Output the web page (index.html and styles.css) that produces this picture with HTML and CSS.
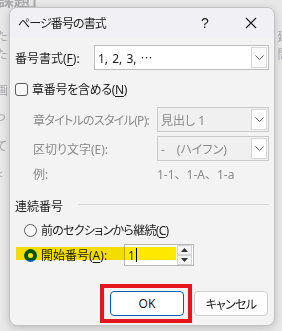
FILE: index.html
```html
<!DOCTYPE html>
<html lang="ja">
<head>
    <meta charset="UTF-8">
    <title>ページ番号の書式</title>
    <link rel="stylesheet" href="styles.css">
</head>
<body>
    <div class="doc">
        <p class="doc-head">課題」</p>
        <p class="doc-line l1">た<span class="gap"></span>建</p>
        <p class="doc-line l2">た<span class="gap"></span>間</p>
        <p class="doc-line l3">画</p>
        <p class="doc-line l4">っ</p>
        <p class="doc-line l5">て</p>
        <p class="doc-line l6">&lt;</p>
    </div>

    <div class="dialog">
        <div class="titlebar">
            <span class="title">ページ番号の書式</span>
            <span class="cap-btn">?</span>
            <span class="cap-btn">
                <svg width="12" height="12" viewBox="0 0 12 12"><path d="M1 1L11 11M11 1L1 11" stroke="#1b1b1b" stroke-width="1.1" fill="none"/></svg>
            </span>
        </div>

        <div class="content">
            <div class="row">
                <span>番号書式(<u>F</u>):</span>
                <div class="select wide">
                    <span class="select-text wide-text">1, 2, 3, <span class="cjk">…</span></span>
                    <span class="drop"><svg width="9" height="5" viewBox="0 0 9 5"><path d="M0.5 0.5L4.5 4.5L8.5 0.5" stroke="#606060" fill="none"/></svg></span>
                </div>
            </div>

            <div class="check-row">
                <span class="checkbox"></span>
                <span class="tight">章番号を含める(<u>N</u>)</span>
            </div>

            <div class="sub-row first">
                <span class="muted tighter">章タイトルのスタイル(P):</span>
                <div class="select narrow disabled">
                    <span class="select-text">見出し 1</span>
                    <span class="drop"><svg width="9" height="5" viewBox="0 0 9 5"><path d="M0.5 0.5L4.5 4.5L8.5 0.5" stroke="#606060" fill="none"/></svg></span>
                </div>
            </div>
            <div class="sub-row">
                <span class="muted">区切り文字(E):</span>
                <div class="select narrow disabled">
                    <span class="select-text">-　(ハイフン)</span>
                    <span class="drop"><svg width="9" height="5" viewBox="0 0 9 5"><path d="M0.5 0.5L4.5 4.5L8.5 0.5" stroke="#606060" fill="none"/></svg></span>
                </div>
            </div>
            <div class="sample-row">
                <span class="muted">例:</span>
                <span class="muted sample-val">1-1、1-A、1-a</span>
            </div>

            <div class="group-head">
                <span>連続番号</span>
                <span class="rule"></span>
            </div>

            <div class="radio-row">
                <span class="radio"></span>
                <span class="tighter">前のセクションから継続(<u>C</u>)</span>
            </div>
            <div class="radio-row start">
                <span class="radio checked"></span>
                <span class="start-label">開始番号(<u>A</u>):</span>
                <div class="spin">
                    <span class="spin-text">1<span class="caret"></span></span>
                    <span class="spin-btns">
                        <span class="spin-btn"><svg width="7" height="4" viewBox="0 0 7 4"><path d="M0 4L3.5 0L7 4Z" fill="#333"/></svg></span>
                        <span class="spin-btn"><svg width="7" height="4" viewBox="0 0 7 4"><path d="M0 0L3.5 4L7 0Z" fill="#333"/></svg></span>
                    </span>
                </div>
                <span class="marker"></span>
            </div>

            <div class="buttons">
                <button class="btn default">OK</button>
                <button class="btn tighter">キャンセル</button>
            </div>
        </div>
    </div>
</body>
</html>
```

FILE: styles.css
```css
body {
    margin: 0;
    height: 331px;
    overflow: hidden;
    position: relative;
    background: #e8e8e8;
    font-family: "Noto Sans", "Noto Sans CJK JP", sans-serif;
    font-size: 12px;
    font-feature-settings: "palt";
    color: #1b1b1b;
}
.doc {
    position: absolute;
    inset: 0;
    color: #a9a9ae;
}
.doc p {
    margin: 0;
    white-space: nowrap;
}
.doc-head {
    font-size: 16px;
    font-weight: bold;
    margin-top: -12px !important;
    margin-left: -2px !important;
    line-height: 24px;
}
.doc-line {
    line-height: 14px;
    margin-left: -4px !important;
}
.doc-line .gap {
    display: inline-block;
    width: 270px;
}
.l1 { margin-top: 18px !important; }
.l2 { margin-top: 4px !important; }
.l3 { margin-top: 22px !important; }
.l4 { margin-top: 12px !important; }
.l5 { margin-top: 16px !important; }
.l6 { margin-top: 14px !important; }

.dialog {
    position: relative;
    margin: 7px 0 0 9px;
    width: 266px;
    height: 319px;
    box-sizing: border-box;
    background: #f3f3f3;
    border: 1px solid #c2c2c2;
    border-radius: 8px;
    box-shadow: 0 2px 8px rgba(0, 0, 0, 0.18);
    display: flex;
    flex-direction: column;
}
.titlebar {
    height: 30px;
    display: flex;
    align-items: center;
    padding-left: 8px;
    background: #f1f0f4;
    border-radius: 8px 8px 0 0;
}
.title {
    flex: 1;
    font-size: 12px;
    letter-spacing: -0.9px;
}
.cap-btn {
    width: 46px;
    height: 30px;
    display: flex;
    align-items: center;
    justify-content: center;
    font-family: "Liberation Sans", sans-serif;
    font-size: 14px;
}
.content {
    padding: 0 5px;
    display: flex;
    flex-direction: column;
    white-space: nowrap;
}
.tight {
    letter-spacing: -0.3px;
}
.tighter {
    letter-spacing: -0.7px;
}
.cjk {
    font-family: "Noto Sans CJK JP", sans-serif;
    font-feature-settings: normal;
}
u {
    text-underline-offset: 2px;
}
.row {
    margin-top: 7px;
    display: flex;
    align-items: center;
    justify-content: space-between;
}
.select {
    height: 25px;
    box-sizing: border-box;
    border: 1px solid #bdbdbd;
    background: #fff;
    display: flex;
    align-items: center;
}
.select.wide {
    width: 175px;
}
.select.narrow {
    width: 112px;
}
.select.disabled {
    background: #f0f0f0;
    border-color: #cacaca;
    color: #8a8a8a;
}
.select-text {
    flex: 1;
    padding-left: 3px;
    white-space: nowrap;
}
.wide-text {
    word-spacing: 1px;
}
.drop {
    width: 16px;
    height: 21px;
    margin-right: 1px;
    box-sizing: border-box;
    border: 1px solid #d8d8d8;
    background: #fafafa;
    display: flex;
    align-items: center;
    justify-content: center;
}
.disabled .drop {
    background: #fff;
}
.check-row {
    margin-top: 10px;
    height: 18px;
    display: flex;
    align-items: center;
    gap: 4px;
}
.checkbox {
    width: 13px;
    height: 13px;
    box-sizing: border-box;
    border: 1px solid #5c5c5c;
    border-radius: 3px;
    background: #f9f9f9;
}
.muted {
    color: #8a8a8a;
}
.sub-row {
    margin-top: 4px;
    padding-left: 18px;
    display: flex;
    align-items: center;
    justify-content: space-between;
}
.sub-row.first {
    margin-top: 9px;
}
.sample-row {
    margin-top: 5px;
    padding-left: 18px;
    height: 16px;
    display: flex;
    align-items: center;
}
.sample-val {
    margin-left: auto;
    width: 112px;
    font-feature-settings: normal;
}
.group-head {
    margin-top: 16px;
    height: 16px;
    display: flex;
    align-items: center;
    gap: 15px;
}
.rule {
    flex: 1;
    height: 1px;
    background: #d8d8d8;
    margin-top: -3px;
}
.radio-row {
    margin-top: 8px;
    padding-left: 9px;
    height: 16px;
    display: flex;
    align-items: center;
    gap: 4px;
}
.radio {
    width: 13px;
    height: 13px;
    box-sizing: border-box;
    border: 1px solid #5c5c5c;
    border-radius: 50%;
    background: #f9f9f9;
}
.radio.checked {
    border: 4px solid #005fb8;
    background: #fff;
}
.radio-row.start {
    position: relative;
    margin-top: 6px;
    height: 22px;
}
.start-label {
    width: 79px;
}
.spin {
    width: 70px;
    height: 22px;
    box-sizing: border-box;
    border: 1px solid #b8b8b8;
    background: #fff;
    display: flex;
    align-items: center;
}
.spin-text {
    flex: 1;
    padding-left: 3px;
    display: flex;
    align-items: center;
}
.caret {
    display: inline-block;
    width: 1px;
    height: 14px;
    background: #000;
    margin-left: 1px;
}
.spin-btns {
    width: 15px;
    height: 20px;
    margin-right: 1px;
    display: flex;
    flex-direction: column;
}
.spin-btn {
    flex: 1;
    box-sizing: border-box;
    border: 1px solid #d4d4d4;
    background: #f4f4f4;
    display: flex;
    align-items: center;
    justify-content: center;
}
.marker {
    position: absolute;
    left: 1px;
    top: 3px;
    width: 160px;
    height: 13px;
    background: #ffe800;
    mix-blend-mode: multiply;
}
.buttons {
    margin-top: 25px;
    margin-right: 1px;
    display: flex;
    justify-content: flex-end;
    gap: 10px;
}
.btn {
    width: 74px;
    height: 25px;
    box-sizing: border-box;
    border: 1px solid #d0d0d0;
    border-radius: 4px;
    background: #fdfdfd;
    font-family: "Noto Sans", "Noto Sans CJK JP", sans-serif;
    font-size: 12px;
    font-feature-settings: "palt";
    color: #1b1b1b;
    padding: 0;
}
.btn.default {
    position: relative;
    border-color: #005fb8;
    background: #fff;
}
.btn.default::after {
    content: "";
    position: absolute;
    top: -8px;
    left: -11px;
    right: -9px;
    bottom: -8px;
    border: 4px solid #e4161c;
}
```
